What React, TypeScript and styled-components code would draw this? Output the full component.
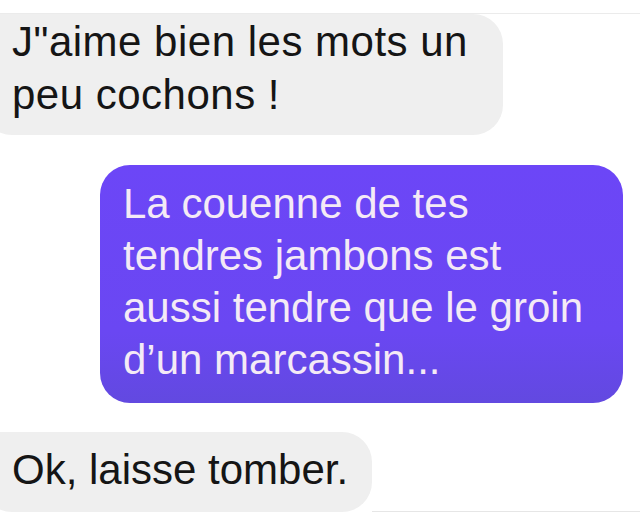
import React from "react";
import styled, { createGlobalStyle, css } from "styled-components";

const GlobalStyle = createGlobalStyle`
  html, body {
    margin: 0;
    padding: 0;
    background: #ffffff;
  }
  body {
    font-family: "Liberation Sans", Arial, Helvetica, sans-serif;
    overflow: hidden;
  }
`;

const Thread = styled.div`
  width: 640px;
  height: 526px;
  box-sizing: border-box;
  padding-top: 13px;
  overflow: hidden;
`;

const Conversation = styled.div`
  border-top: 1px solid #ebebeb;
  display: flex;
  flex-direction: column;
  gap: 30px;
`;

const Row = styled.div<{ $out?: boolean }>`
  display: flex;
  justify-content: ${(p) => (p.$out ? "flex-end" : "flex-start")};
  padding-right: ${(p) => (p.$out ? "17px" : "0")};
`;

const Bubble = styled.div<{
  $out?: boolean;
  $pt: number;
  $pb: number;
  $pr: number;
  $spacing?: number;
}>`
  font-size: 42px;
  line-height: 53px;
  letter-spacing: ${(p) => p.$spacing ?? 0}px;
  padding: ${(p) => `${p.$pt}px ${p.$pr}px ${p.$pb}px`};
  border-radius: 30px;
  ${(p) =>
    p.$out
      ? css`
          background: linear-gradient(180deg, #6c46f7 0%, #6a47f2 70%, #6249e0 100%);
          color: #f4eaf6;
          padding-left: 23px;
          line-height: 52px;
        `
      : css`
          background: #efefef;
          color: #151515;
          margin-left: -18px;
          padding-left: 30px;
          border-top-left-radius: 0;
        `}
`;

const Line = styled.span`
  display: block;
  white-space: nowrap;
`;

const BottomRule = styled.div`
  flex: 1;
  align-self: flex-end;
  border-bottom: 1px solid #e6e6e6;
`;

const LastRow = styled(Row)`
  margin-top: -1px;
`;

export default function App() {
  return (
    <>
      <GlobalStyle />
      <Thread>
        <Conversation>
          <Row>
            <Bubble $pt={1} $pb={14} $pr={35} $spacing={0.5}>
              <Line>J"aime bien les mots un</Line>
              <Line>peu cochons !</Line>
            </Bubble>
          </Row>
          <Row $out>
            <Bubble $out $pt={13} $pb={17} $pr={40}>
              <Line>La couenne de tes</Line>
              <Line>tendres jambons est</Line>
              <Line>aussi tendre que le groin</Line>
              <Line>d’un marcassin...</Line>
            </Bubble>
          </Row>
          <LastRow>
            <Bubble $pt={11} $pb={16} $pr={24}>
              <Line>Ok, laisse tomber.</Line>
            </Bubble>
            <BottomRule />
          </LastRow>
        </Conversation>
      </Thread>
    </>
  );
}
